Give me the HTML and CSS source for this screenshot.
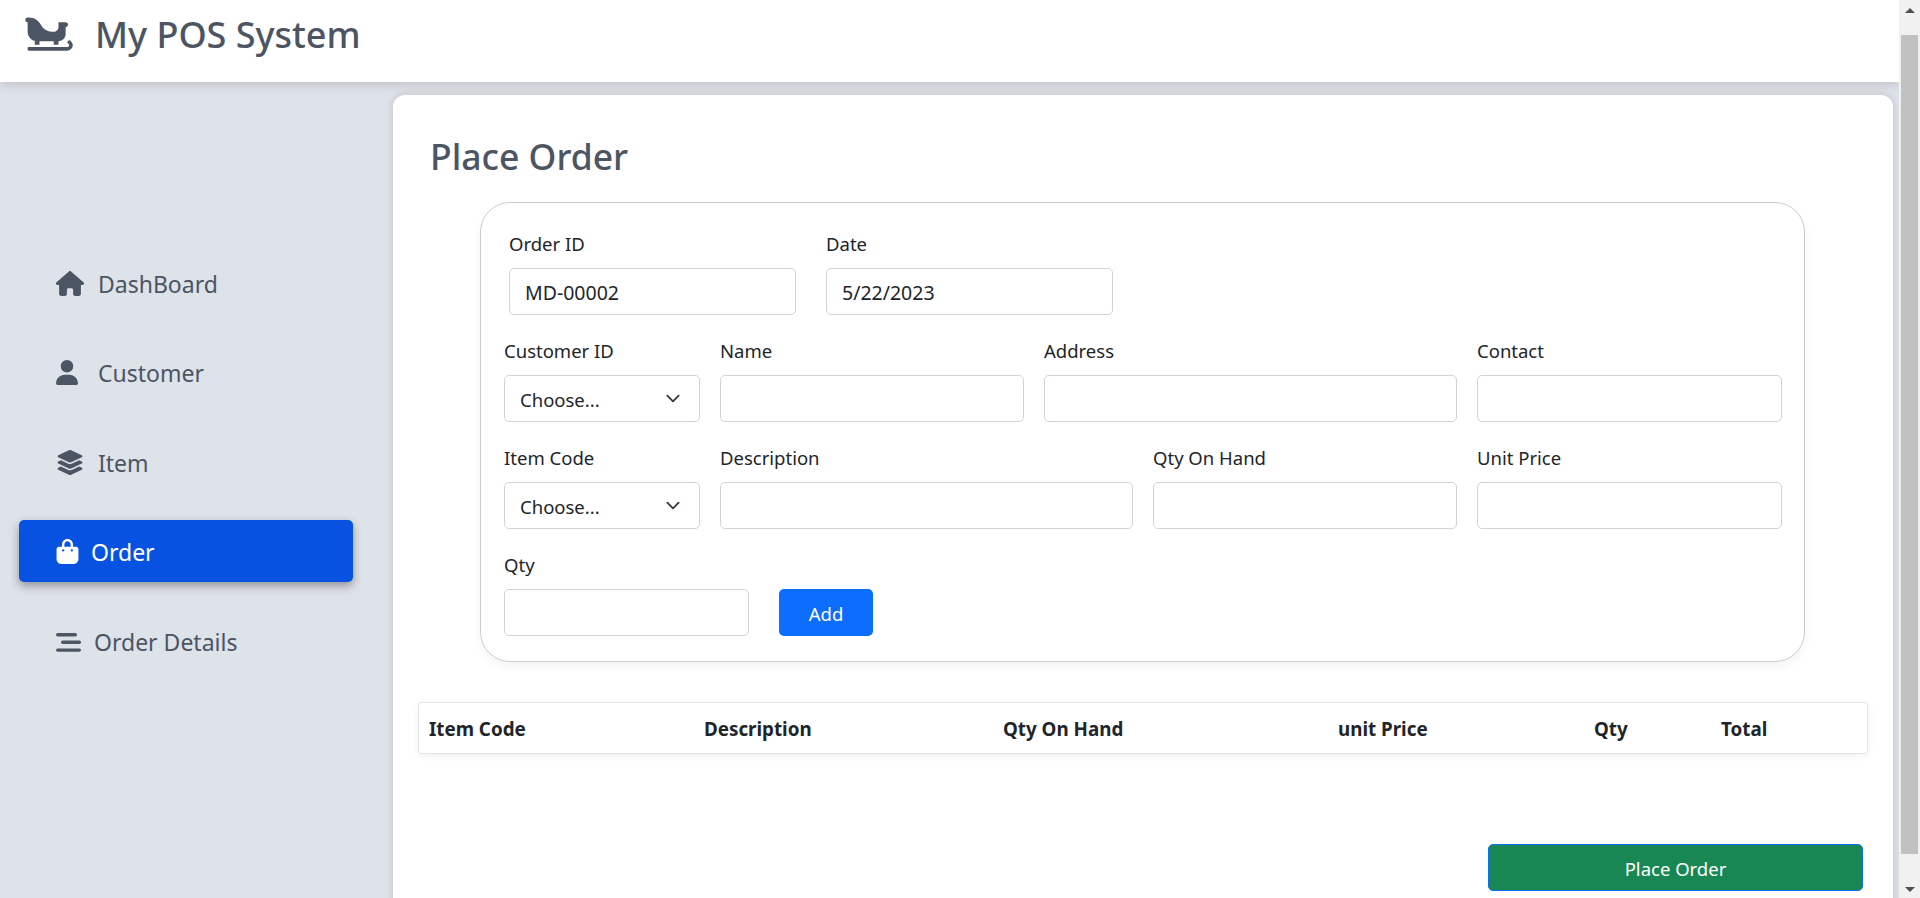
FILE: index.html
```html
<!DOCTYPE html>
<html lang="en">
  <head>
    <meta charset="UTF-8" />
    <meta name="viewport" content="width=device-width, initial-scale=1.0" />
    <title>My POS System</title>
    <link rel="stylesheet" href="styles.css">
  </head>

  <body>
    <div class="page">
      <header class="topbar">
        <svg class="logo" viewBox="0 0 640 512"><path d="M612.7 350.7l-9.3-7.4c-6.9-5.5-17-4.4-22.5 2.5l-10 12.5c-5.5 6.9-4.4 17 2.5 22.5l9.3 7.4c5.9 4.7 9.2 11.7 9.2 19.2 0 13.6-11 24.6-24.6 24.6H48c-8.8 0-16 7.2-16 16v16c0 8.8 7.2 16 16 16h516c39 0 73.7-29.3 75.9-68.3 1.4-23-8.4-44.8-26.2-58.9zM32 224c0 59.6 40.9 109.2 96 123.5V400h64v-48h192v48h64v-48c53 0 96-43 96-96v-96c17.7 0 32-14.3 32-32s-14.3-32-32-32h-96v64c0 35.3-28.7 64-64 64h-20.7c-65.8 0-125.9-37.2-155.3-96-29.4-58.8-89.6-96-155.3-96H32C14.3 32 0 46.3 0 64s14.3 32 32 32v128z"/></svg>
        <span class="brand">My POS System</span>
      </header>

      <div class="layout">
        <nav class="sidebar">
          <a class="nav-item nav-home">
            <svg viewBox="0 0 576 512"><path d="M575.8 255.5c0 18-15 32.1-32 32.1h-32l.7 160.2c0 2.7-.2 5.4-.5 8.1V472c0 22.1-17.9 40-40 40H456c-1.1 0-2.2 0-3.3-.1c-1.4 .1-2.8 .1-4.2 .1H416 392c-22.1 0-40-17.9-40-40V448 384c0-17.7-14.3-32-32-32H256c-17.7 0-32 14.3-32 32v64 24c0 22.1-17.9 40-40 40H160 128.1c-1.5 0-3-.1-4.5-.2c-1.2 .1-2.4 .2-3.6 .2H104c-22.1 0-40-17.9-40-40V360c0-.9 0-1.9 .1-2.8V287.6H32c-18 0-32-14-32-32.1c0-9 3-17 10-24L266.4 8c7-7 15-8 22-8s15 2 21 7L564.8 231.5c8 7 12 15 11 24z"/></svg>
            DashBoard
          </a>
          <a class="nav-item nav-customer">
            <svg viewBox="0 0 448 512"><path d="M224 256A128 128 0 1 0 224 0a128 128 0 1 0 0 256zm-45.7 48C79.8 304 0 383.8 0 482.3C0 498.7 13.3 512 29.7 512H418.3c16.4 0 29.7-13.3 29.7-29.7C448 383.8 368.2 304 269.7 304H178.3z"/></svg>
            Customer
          </a>
          <a class="nav-item nav-layers">
            <svg viewBox="0 0 576 512"><path d="M264.5 5.2c14.9-6.9 32.1-6.9 47 0l218.6 101c8.5 3.9 13.9 12.4 13.9 21.8s-5.4 17.9-13.9 21.8l-218.6 101c-14.9 6.9-32.1 6.9-47 0L45.9 149.8C37.4 145.8 32 137.3 32 128s5.4-17.9 13.9-21.8L264.5 5.2zM476.9 209.6l53.2 24.6c8.5 3.9 13.9 12.4 13.9 21.8s-5.4 17.9-13.9 21.8l-218.6 101c-14.9 6.9-32.1 6.9-47 0L45.9 277.8C37.4 273.8 32 265.3 32 256s5.4-17.9 13.9-21.8l53.2-24.6 152 70.2c23.4 10.8 50.4 10.8 73.8 0l152-70.2zm-152 198.2l152-70.2 53.2 24.6c8.5 3.9 13.9 12.4 13.9 21.8s-5.4 17.9-13.9 21.8l-218.6 101c-14.9 6.9-32.1 6.9-47 0L45.9 405.8C37.4 401.8 32 393.3 32 384s5.4-17.9 13.9-21.8l53.2-24.6 152 70.2c23.4 10.8 50.4 10.8 73.8 0z"/></svg>
            Item
          </a>
          <a class="nav-item nav-order active">
            <svg viewBox="0 0 448 512"><path d="M160 112c0-35.3 28.7-64 64-64s64 28.7 64 64v48H160V112zm-48 48H48c-26.5 0-48 21.5-48 48V416c0 53 43 96 96 96H352c53 0 96-43 96-96V208c0-26.5-21.5-48-48-48H336V112C336 50.1 285.9 0 224 0S112 50.1 112 112v48zm24 48a24 24 0 1 1 0 48 24 24 0 1 1 0-48zm152 24a24 24 0 1 1 48 0 24 24 0 1 1 -48 0z"/></svg>
            Order
          </a>
          <a class="nav-item nav-details">
            <svg viewBox="0 0 25 19"><rect x="0" y="0" width="21" height="3.4" rx="1.7"/><rect x="5" y="7.6" width="20" height="3.4" rx="1.7"/><rect x="0" y="15.4" width="25" height="3.4" rx="1.7"/></svg>
            Order Details
          </a>
        </nav>

        <main class="content">
          <h2 class="title">Place Order</h2>

          <form class="order-form">
            <div class="row row-order">
              <div class="field"><label>Order ID</label><input type="text" value="MD-00002"></div>
              <div class="field"><label>Date</label><input type="text" value="5/22/2023"></div>
            </div>
            <div class="row row-customer">
              <div class="field"><label>Customer ID</label><select><option>Choose...</option></select></div>
              <div class="field"><label>Name</label><input type="text"></div>
              <div class="field"><label>Address</label><input type="text"></div>
              <div class="field"><label>Contact</label><input type="text"></div>
            </div>
            <div class="row row-item">
              <div class="field"><label>Item Code</label><select><option>Choose...</option></select></div>
              <div class="field"><label>Description</label><input type="text"></div>
              <div class="field"><label>Qty On Hand</label><input type="text"></div>
              <div class="field"><label>Unit Price</label><input type="text"></div>
            </div>
            <div class="row row-qty">
              <div class="field"><label>Qty</label><input type="text"></div>
              <button type="button" class="btn-add">Add</button>
            </div>
          </form>

          <div class="table-box">
            <table>
              <thead>
                <tr>
                  <th class="col-code">Item Code</th>
                  <th class="col-desc">Description</th>
                  <th class="col-hand">Qty On Hand</th>
                  <th class="col-price">unit Price</th>
                  <th class="col-qty">Qty</th>
                  <th>Total</th>
                </tr>
              </thead>
            </table>
          </div>

          <button type="button" class="btn-place">Place Order</button>
        </main>
      </div>
    </div>

    <div class="scrollbar">
      <span class="arrow-up"></span>
      <span class="thumb"></span>
      <span class="arrow-down"></span>
    </div>
  </body>
</html>
```

FILE: styles.css
```css
* {
  margin: 0;
  padding: 0;
  box-sizing: border-box;
}

html,
body {
  height: 898px;
  overflow: hidden;
}

body {
  display: flex;
  font-family: "Noto Sans", "Open Sans", sans-serif;
  font-size: 18.5px;
  color: #212529;
  background: #dee2e9;
}

.page {
  flex: 1;
  height: 898px;
  overflow: hidden;
}

/* top bar */
.topbar {
  position: relative;
  z-index: 2;
  display: flex;
  align-items: flex-start;
  height: 82px;
  padding: 15px 0 0 25px;
  background: #fff;
  box-shadow: 0 2px 10px rgba(0, 0, 0, 0.16);
  color: #4b5563;
}

.logo {
  width: 48px;
  height: 38px;
  fill: #4b5563;
}

.brand {
  margin: -2px 0 0 22px;
  font-size: 36px;
  font-weight: 500;
  line-height: 44px;
}

.layout {
  display: flex;
}

/* side menu */
.sidebar {
  display: flex;
  flex-direction: column;
  gap: 28px;
  width: 393px;
  padding: 168px 40px 0 19px;
  flex-shrink: 0;
}

.nav-item {
  display: flex;
  align-items: center;
  height: 62px;
  padding: 3px 0 0 37px;
  border-radius: 5px;
  font-size: 23px;
  color: #4b5563;
}

.nav-item svg {
  height: 25px;
  fill: #4b5563;
  flex-shrink: 0;
}

.nav-home {
  padding-top: 5px;
}

.nav-home svg {
  width: 28px;
  margin-right: 14px;
}

.nav-customer svg {
  width: 22px;
  margin-right: 20px;
}

.nav-layers svg {
  width: 28px;
  margin-right: 14px;
}

.nav-order svg {
  width: 23px;
  margin-right: 12px;
}

.nav-details {
  padding-top: 2px;
}

.nav-details svg {
  width: 25px;
  height: 19px;
  margin-right: 13px;
}

.nav-item.active {
  padding-top: 1px;
  background: #0752e0;
  color: #fff;
  box-shadow: 0 4px 10px rgba(0, 0, 0, 0.35);
}

.nav-item.active svg {
  fill: #fff;
}

/* main card */
.content {
  display: flex;
  flex-direction: column;
  flex: 1;
  height: 830px;
  margin: 13px 6px 0 0;
  padding-top: 26px;
  background: #fff;
  border-radius: 12px;
  box-shadow: 0 0 10px rgba(0, 0, 0, 0.14);
}

.title {
  height: 81px;
  margin-left: 37px;
  font-size: 35.5px;
  font-weight: 500;
  line-height: 70px;
  color: #4b5563;
}

.order-form {
  width: 1325px;
  margin-left: 87px;
  padding: 26px 0 25px 23px;
  border: 1px solid #ccc;
  border-radius: 30px;
  box-shadow: 0 4px 10px rgba(0, 0, 0, 0.05);
}

.row {
  display: grid;
  column-gap: 20px;
  margin-bottom: 21px;
}

.row-order {
  grid-template-columns: 287px 287px;
  column-gap: 30px;
  margin-left: 5px;
}

.row-customer {
  grid-template-columns: 196px 304px 413px 305px;
}

.row-item {
  grid-template-columns: 196px 413px 304px 305px;
}

.row-qty {
  grid-template-columns: 245px 94px;
  column-gap: 30px;
  align-items: end;
  margin-bottom: 0;
}

.field label {
  display: block;
  height: 30px;
  margin-bottom: 9px;
  line-height: 30px;
}

.field input,
.field select {
  display: block;
  width: 100%;
  height: 47px;
  padding: 2px 15px 0;
  border: 1px solid #ced4da;
  border-radius: 5px;
  background-color: #fff;
  font: inherit;
  color: #212529;
}

.field input {
  font-size: 19.5px;
}

.field select {
  appearance: none;
  background-image: url("data:image/svg+xml,%3csvg xmlns='http://www.w3.org/2000/svg' viewBox='0 0 16 16'%3e%3cpath fill='none' stroke='%23343a40' stroke-linecap='round' stroke-linejoin='round' stroke-width='2' d='M2 5l6 6 6-6'/%3e%3c/svg%3e");
  background-repeat: no-repeat;
  background-position: right 16px center;
  background-size: 20px 15px;
}

.btn-add {
  height: 47px;
  padding-top: 2px;
  border: none;
  border-radius: 5px;
  background: #0d6efd;
  font: inherit;
  color: #fff;
}

/* table header */
.table-box {
  width: 1450px;
  margin: 40px 0 0 25px;
  border: 1px solid #e3e4ea;
  border-radius: 3px;
  box-shadow: 0 2px 8px rgba(0, 0, 0, 0.06);
}

table {
  width: 100%;
  table-layout: fixed;
  border-collapse: collapse;
}

th {
  height: 50px;
  padding: 1px 0 0 10px;
  text-align: left;
  font-size: 18.8px;
  font-weight: 700;
}

.col-code {
  width: 275px;
}

.col-desc {
  width: 299px;
}

.col-hand {
  width: 335px;
}

.col-price {
  width: 256px;
}

.col-qty {
  width: 127px;
}

.btn-place {
  align-self: flex-end;
  width: 375px;
  height: 47px;
  margin: 90px 30px 0 0;
  padding-top: 2px;
  border: 1px solid #0d6efd;
  border-radius: 5px;
  background: #198754;
  font: inherit;
  color: #fff;
}

/* fake browser scrollbar */
.scrollbar {
  position: relative;
  width: 21px;
  height: 898px;
  padding: 35px 2px 0;
  background: #f1f1f1;
  flex-shrink: 0;
}

.thumb {
  display: block;
  height: 819px;
  background: #c1c1c1;
}

.arrow-up,
.arrow-down {
  position: absolute;
  left: 6px;
  border-left: 5px solid transparent;
  border-right: 5px solid transparent;
}

.arrow-up {
  top: 8px;
  border-bottom: 5px solid #505050;
}

.arrow-down {
  bottom: 6px;
  border-top: 5px solid #505050;
}
```
